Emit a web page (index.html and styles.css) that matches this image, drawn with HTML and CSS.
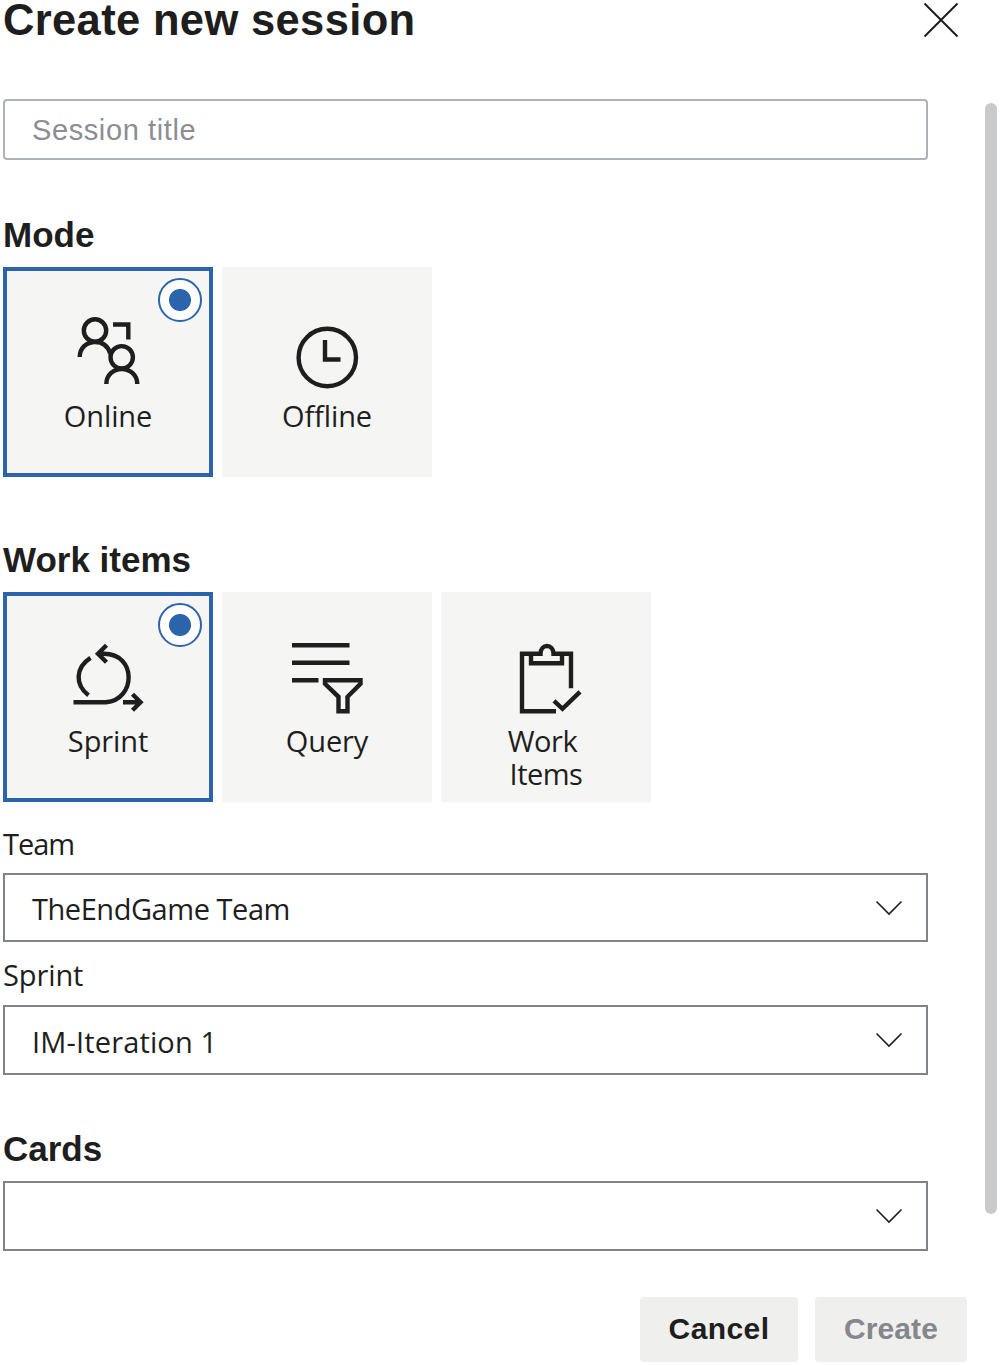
FILE: index.html
```html
<!DOCTYPE html>
<html lang="en">
<head>
<meta charset="utf-8">
<title>Create new session</title>
<link rel="stylesheet" href="styles.css">
</head>
<body>
<div class="panel">
  <header class="panel-header">
    <h1>Create new session</h1>
    <button class="close" aria-label="Close">
      <svg width="36" height="36" viewBox="0 0 36 36"><path d="M1.5 1.5 34.5 34.5M34.5 1.5 1.5 34.5"/></svg>
    </button>
  </header>
  <div class="panel-body">
    <main class="form">
      <input class="title-input" type="text" placeholder="Session title">

      <h2 class="mode-heading">Mode</h2>
      <div class="tiles">
        <div class="tile selected">
          <span class="radio"></span>
          <svg class="icon" width="76" height="76" viewBox="0 0 76 76">
            <circle cx="25" cy="15.500" r="11.200"/>
            <circle cx="51.700" cy="42.300" r="11.200"/>
            <path d="M9.700 42C9.700 33 16.500 27 25 27S38 31.500 40.300 38.500M36.300 69C36.300 60 43.300 54 51.700 54S67.300 60 67.300 69M43 9.500H58.300V24.500"/>
          </svg>
          <span class="label">Online</span>
        </div>
        <div class="tile">
          <svg class="icon" width="76" height="76" viewBox="0 0 76 76">
            <circle cx="38.300" cy="42.500" r="28.700"/>
            <path d="M36 25V44.500H51.500"/>
          </svg>
          <span class="label">Offline</span>
        </div>
      </div>

      <h2 class="items-heading">Work items</h2>
      <div class="tiles">
        <div class="tile selected">
          <span class="radio"></span>
          <svg class="icon" width="76" height="76" viewBox="0 -1.8 76 76">
            <path d="M20.500 16C5 26 5 43 18.500 53.500M3.500 60.500H36C66 58 67 12 34 12H28M36.500 3.500 28 12 36.500 20.500M53 60.500H70.500M62.500 52.500 70.500 60.500 62.500 68.500"/>
          </svg>
          <span class="label">Sprint</span>
        </div>
        <div class="tile">
          <svg class="icon" width="76" height="76" viewBox="0 -1.8 76 76">
            <path d="M3 3.500H60.500M3 21H60.500M3 38.500H29.500M36 38.500H71.500V42L58.500 55V69.500H49.500V55L36 42Z"/>
          </svg>
          <span class="label">Query</span>
        </div>
        <div class="tile">
          <svg class="icon" width="76" height="76" viewBox="-1 -1.8 76 76">
            <path d="M47 69.500H13V12H31.500C31.500 1.500 44.500 1.500 44.500 12H62V46.500M22 12V21.500H53V12M45 59 53.500 67 71 50"/>
          </svg>
          <span class="label work-items">Work&nbsp;<br>Items</span>
        </div>
      </div>

      <label class="team-label">Team</label>
      <div class="select team"><span>TheEndGame Team</span><svg width="28" height="16" viewBox="0 0 28 16"><path d="M1.500 1.500 14 14 26.500 1.500"/></svg></div>
      <label class="sprint-label">Sprint</label>
      <div class="select iteration"><span>IM-Iteration 1</span><svg width="28" height="16" viewBox="0 0 28 16"><path d="M1.500 1.500 14 14 26.500 1.500"/></svg></div>

      <h2 class="cards-heading">Cards</h2>
      <div class="select"><span></span><svg width="28" height="16" viewBox="0 0 28 16"><path d="M1.500 1.500 14 14 26.500 1.500"/></svg></div>
    </main>
    <div class="scrollbar"></div>
  </div>
  <footer class="actions">
    <button class="button cancel">Cancel</button>
    <button class="button create" disabled>Create</button>
  </footer>
</div>
</body>
</html>
```
FILE: styles.css
```css
* {
  box-sizing: border-box;
}

body {
  margin: 0;
  background: #fff;
  color: #1e1e1e;
  font-family: "Open Sans", "Noto Sans", sans-serif;
  font-size: 29px;
}

.panel {
  display: flex;
  flex-direction: column;
  height: 1365px;
}

.panel-header {
  display: flex;
  justify-content: space-between;
  height: 99px;
  padding: 0 41px 0 3px;
}

h1,
h2 {
  margin: 0;
  font-family: "Liberation Sans", Arial, sans-serif;
  font-weight: 700;
}

h1 {
  font-size: 43.5px;
  line-height: 40px;
  letter-spacing: 0.35px;
}

h2 {
  height: 64px;
  font-size: 35px;
  line-height: 64px;
}

.close {
  height: 36px;
  margin-top: 2px;
  padding: 0;
  border: 0;
  background: none;
}

svg {
  display: block;
  fill: none;
  stroke: #1e1e1e;
}

.close svg {
  stroke-width: 2;
}

.panel-body {
  display: flex;
  justify-content: space-between;
  height: 1153px;
  padding: 0 3px;
}

.form {
  display: flex;
  flex-direction: column;
  width: 925px;
}

.title-input {
  width: 100%;
  height: 61px;
  padding: 2px 27px 0;
  border: 2px solid #aeb2b6;
  border-radius: 4px;
  font-family: "Liberation Sans", Arial, sans-serif;
  font-size: 29px;
  letter-spacing: 0.6px;
}

.title-input::placeholder {
  color: #8b8e92;
}

.mode-heading {
  margin-top: 43px;
}

.items-heading {
  margin-top: 51px;
}

.tiles {
  display: flex;
  gap: 9px;
  height: 210px;
}

.tile {
  position: relative;
  display: flex;
  flex-direction: column;
  align-items: center;
  width: 210px;
  height: 210px;
  padding-top: 48px;
  background: #f5f5f4;
}

.selected {
  padding-top: 44px;
  border: 4px solid #2b64ad;
}

.radio {
  position: absolute;
  top: 7px;
  right: 7px;
  width: 44px;
  height: 44px;
  border: 2px solid #2b64ad;
  border-radius: 50%;
  background: radial-gradient(circle, #2b64ad 10.500px, #fff 11.500px);
}

.icon {
  stroke-width: 4.400;
}

.label {
  margin-top: 8px;
  line-height: 33px;
  letter-spacing: -0.1px;
}

.work-items {
  text-align: center;
  letter-spacing: -0.5px;
}

.team-label,
.sprint-label {
  height: 40px;
  line-height: 40px;
}

.team-label {
  margin-top: 22px;
  margin-bottom: 9px;
  letter-spacing: -1px;
}

.sprint-label {
  margin-top: 13px;
  margin-bottom: 10px;
  letter-spacing: -0.1px;
}

.select {
  display: flex;
  align-items: center;
  justify-content: space-between;
  height: 70px;
  padding: 0 23px 0 27px;
  border: 2px solid #818487;
}

.team {
  height: 69px;
}

.select span {
  padding-top: 2px;
}

.team span {
  letter-spacing: -0.45px;
}

.iteration span {
  letter-spacing: 0.15px;
}

.select svg {
  stroke-width: 1.600;
}

.cards-heading {
  margin-top: 42px;
}

.scrollbar {
  width: 12px;
  height: 1111px;
  margin-top: 4px;
  border-radius: 6px;
  background: #c8cacc;
}

.actions {
  display: flex;
  justify-content: flex-end;
  gap: 17px;
  padding: 45px 33px 0 0;
}

.button {
  height: 65px;
  padding: 0 0 2px;
  border: 0;
  border-radius: 4px;
  background: #efefee;
  color: #1e1e1e;
  font: 700 30px "Liberation Sans", Arial, sans-serif;
  letter-spacing: 0.4px;
}

.cancel {
  width: 158px;
}

.create {
  width: 152px;
  color: #85878a;
  letter-spacing: 0.1px;
}
```
